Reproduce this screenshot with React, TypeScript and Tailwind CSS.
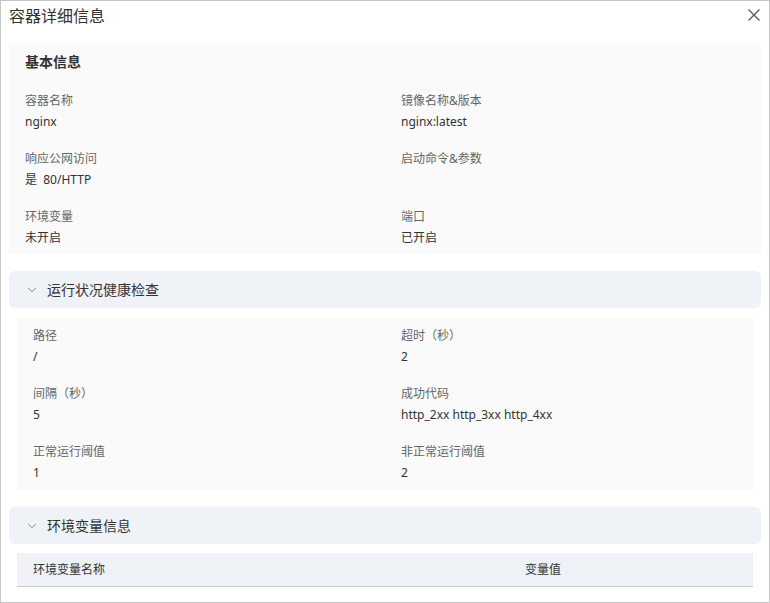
import { ChevronDown } from "lucide-react";

type Field = { label: string; value: string };

const basicFields: Field[] = [
  { label: "容器名称", value: "nginx" },
  { label: "镜像名称&版本", value: "nginx:latest" },
  { label: "响应公网访问", value: "是  80/HTTP" },
  { label: "启动命令&参数", value: "" },
  { label: "环境变量", value: "未开启" },
  { label: "端口", value: "已开启" },
];

const healthFields: Field[] = [
  { label: "路径", value: "/" },
  { label: "超时（秒）", value: "2" },
  { label: "间隔（秒）", value: "5" },
  { label: "成功代码", value: "http_2xx http_3xx http_4xx" },
  { label: "正常运行阈值", value: "1" },
  { label: "非正常运行阈值", value: "2" },
];

function FieldItem({ field }: { field: Field }) {
  return (
    <div className="flex flex-col">
      <span className="text-xs leading-5 text-[#666]">{field.label}</span>
      <span className="mt-px text-xs leading-5 text-[#333] whitespace-pre min-h-5">
        {field.value}
      </span>
    </div>
  );
}

function SectionHeader({ title }: { title: string }) {
  return (
    <div className="mx-2 h-[37px] rounded-md bg-[#eff2f7] flex items-center pl-4">
      <ChevronDown className="w-[14px] h-[14px] text-[#777]" strokeWidth={1.5} />
      <span className="ml-2 text-sm text-[#333]">{title}</span>
    </div>
  );
}

export default function App() {
  return (
    <div
      className="w-[770px] h-[603px] border border-[#c6c6c6] bg-white overflow-hidden"
      style={{ fontFamily: '"Noto Sans", "Noto Sans CJK SC", sans-serif' }}
    >
      <div className="h-[29px] flex items-center justify-between pl-2 pr-[9px]">
        <h1 className="text-base text-[#333]">容器详细信息</h1>
        <svg width="12" height="12" viewBox="0 0 12 12" className="-mt-px">
          <path
            d="M0.5 0.5L11.5 11.5M11.5 0.5L0.5 11.5"
            stroke="#555"
            strokeWidth="1.3"
            fill="none"
          />
        </svg>
      </div>

      <section className="mx-2 mt-[13px] bg-[#fafafa] pl-4 pt-[9px] pb-[6px]">
        <h2 className="text-sm leading-5 font-semibold text-[#333]">基本信息</h2>
        <div className="mt-[19px] grid grid-cols-[376px_1fr] gap-y-[17px]">
          {basicFields.map((f) => (
            <FieldItem key={f.label} field={f} />
          ))}
        </div>
      </section>

      <div className="mt-[17px]">
        <SectionHeader title="运行状况健康检查" />
      </div>
      <section className="mx-4 mt-[10px] bg-[#fafafa] pl-4 pt-2 pb-[7px]">
        <div className="grid grid-cols-[368px_1fr] gap-y-[17px]">
          {healthFields.map((f) => (
            <FieldItem key={f.label} field={f} />
          ))}
        </div>
      </section>

      <div className="mt-[17px]">
        <SectionHeader title="环境变量信息" />
      </div>
      <div className="mx-4 mt-[9px] h-[34px] bg-[#eef1f6] border-b border-[#c8c8c8] grid grid-cols-[492px_1fr] items-center px-4">
        <span className="text-xs text-[#333]">环境变量名称</span>
        <span className="text-xs text-[#333]">变量值</span>
      </div>
    </div>
  );
}
